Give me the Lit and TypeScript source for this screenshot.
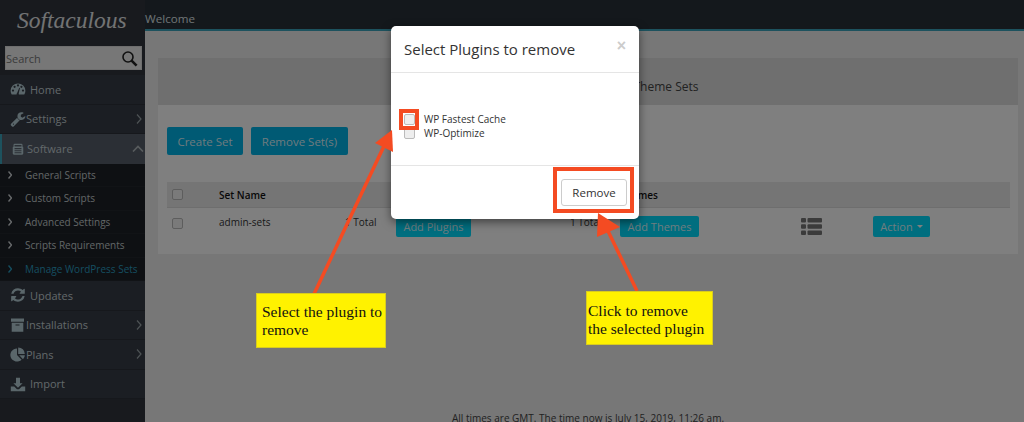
import { LitElement, html, css, svg } from "lit";
import { customElement } from "lit/decorators.js";

const icons: Record<string, unknown> = {
  home: svg`<path d="M8 2.4a7.4 7.4 0 0 0-7.4 7.4c0 1.4.4 2.7 1.1 3.8h12.6c.7-1.1 1.1-2.4 1.1-3.8A7.4 7.4 0 0 0 8 2.4z"/><g fill="#363c46"><circle cx="3" cy="9.6" r="1.1"/><circle cx="4.6" cy="5.8" r="1.1"/><circle cx="8" cy="4.4" r="1.1"/><circle cx="11.4" cy="5.8" r="1.1"/><circle cx="13" cy="9.6" r="1.1"/><path d="M7 12.2 9.3 6.8l.7.3-1.3 5.4a1.2 1.2 0 1 1-1.7-.3z"/></g>`,
  settings: svg`<g transform="scale(.0089)"><path d="M448 1472q0-26-19-45t-45-19-45 19-19 45 19 45 45 19 45-19 19-45zm644-420l-682 682q-37 37-90 37-52 0-91-37l-106-108q-38-36-38-90 0-53 38-91l681-681q39 98 114.5 173.5t173.5 114.5zm634-435q0 39-23 106-47 134-164.5 217.5t-258.5 83.5q-185 0-316.5-131.5t-131.5-316.5 131.5-316.5 316.5-131.5q58 0 121.5 16.5t107.5 46.5q16 11 16 28t-16 28l-293 169v224l193 106q5-3 79-48.5t135.5-81 70.5-35.5q15 0 23.5 10t8.5 25z"/></g>`,
  software: svg`<path fill-rule="evenodd" d="M3.5 1h9A1.5 1.5 0 0 1 14 2.5V4.5l1 1v8.5a1.5 1.5 0 0 1-1.5 1.5h-11A1.5 1.5 0 0 1 1 14V5.5l1-1V2.5A1.5 1.5 0 0 1 3.5 1zM3.4 2.6v2.2h9.2V2.6zM3.4 6.8v1.5h9.2V6.8zm0 2.7V11h9.2V9.5zm0 2.7v1.5h9.2v-1.5z"/>`,
  updates: svg`<g transform="scale(.0089)"><path d="M1639 1056q0 5-1 7-64 268-268 434.5t-478 166.5q-146 0-282.5-55t-243.5-157l-129 129q-19 19-45 19t-45-19-19-45v-448q0-26 19-45t45-19h448q26 0 45 19t19 45-19 45l-137 137q71 66 161 102t187 36q134 0 250-65t186-179q11-17 53-117 8-23 30-23h192q13 0 22.5 9.5t9.5 22.5zm25-800v448q0 26-19 45t-45 19h-448q-26 0-45-19t-19-45 19-45l138-138q-148-137-349-137-134 0-250 65t-186 179q-11 17-53 117-8 23-30 23h-199q-13 0-22.5-9.5t-9.5-22.5v-7q65-268 270-434.5t480-166.5q146 0 284 55.5t245 156.5l130-129q19-19 45-19t45 19 19 45z"/></g>`,
  installations: svg`<path fill-rule="evenodd" d="M1 1.5h13v3.2H1zM1.7 5.7h11.6v9.1H1.7zM5.5 7.4v1.2h4V7.4z"/>`,
  plans: svg`<path d="M7 2.4V9l4.6 4.7A6.6 6.6 0 1 1 7 2.4z"/><path d="M8.2 1.4A6.6 6.6 0 0 1 14.8 8H8.2z"/><path d="M9.2 9.2h5.7a6.6 6.6 0 0 1-1.9 4z"/>`,
  import: svg`<path d="M6 1.8h4v5.4h2.6L8 11.8 3.4 7.2H6z"/><path d="M.8 10.4h3.4L7 13.2h2l2.8-2.8h3.4v4.8H.8z"/>`,
};

const menuTop = [
  { label: "Home", icon: "home", slot: "wide" },
  { label: "Settings", icon: "settings", slot: "narrow", arrow: true },
];
const menuBottom = [
  { label: "Updates", icon: "updates", slot: "wide" },
  { label: "Installations", icon: "installations", slot: "narrow", arrow: true },
  { label: "Plans", icon: "plans", slot: "narrow", arrow: true },
  { label: "Import", icon: "import", slot: "wide" },
];
const subs = ["General Scripts", "Custom Scripts", "Advanced Settings", "Scripts Requirements", "Manage WordPress Sets"];

@customElement("app-root")
export class AppRoot extends LitElement {
  static styles = css`
    :host { display: block; width: 1024px; height: 422px; overflow: hidden; position: relative; font-family: "Open Sans", sans-serif; background: #eee; }
    .app { display: flex; height: 422px; }
    .side { width: 145px; flex: none; background: #30343c; display: flex; flex-direction: column; }
    .logo { height: 46px; box-sizing: border-box; padding: 0 0 0 17px; font: italic 23.5px/41px "Liberation Serif", serif; color: #e4e6e8; white-space: nowrap; overflow: hidden; }
    .search { margin: 0 3px 5px 5px; height: 24px; box-sizing: border-box; background: #eee; border: 1px solid #ddd; display: flex; align-items: center; justify-content: space-between; padding: 0 3px 0 0; font-size: 11px; color: #777; }
    .search svg { width: 17px; height: 17px; }
    .item { height: 29.5px; box-sizing: border-box; display: flex; align-items: center; padding-left: 10px; background: #363c46; border-bottom: 1px solid #2c3038; font-size: 11px; color: #c4d0d4; }
    .item svg.ic { width: 16px; height: 16px; fill: #b4ccd4; flex: none; }
    .slot-wide svg.ic { margin-right: 4px; }
    .slot-narrow svg.ic { margin-right: 0; }
    .item .lab { flex: 1; }
    .arrow { width: 6px; height: 10px; margin-right: 3px; fill: none; stroke: #9aa4a8; stroke-width: 1.2; flex: none; }
    .item.active { background: #565e6a; border-left: 2px solid #3aa5bd; padding-left: 8px; border-bottom: 0; }
    .item.active svg.ic { width: 12px; height: 12px; margin: 0 3px 0 2px; }
    .active .up { width: 12px; height: 7px; margin-right: 1px; fill: none; stroke: #b0b8bc; stroke-width: 1.6; }
    .subs { background: #1c2026; }
    .sub { height: 23.5px; box-sizing: border-box; display: flex; align-items: center; gap: 13px; padding-left: 8px; font-size: 10px; color: #c4ccce; border-bottom: 1px solid #22262c; }
    .sub svg { width: 4px; height: 8px; fill: none; stroke: #d0d4d8; stroke-width: 1.4; flex: none; }
    .sub.on { color: #2a9cc0; }
    .sub.on svg { stroke: #2a9cc0; }
    .main { flex: 1; min-width: 0; display: flex; flex-direction: column; }
    .top { height: 29px; background: #283038; color: #dfe6e8; font-size: 11.6px; line-height: 38px; flex: none; box-sizing: border-box; }
    .strip { height: 2px; background: #3aa5bd; flex: none; }
    .content { flex: 1; padding: 27px 6px 0 13px; display: flex; flex-direction: column; }
    .panel { background: #fff; height: 196px; flex: none; }
    .phead { height: 47px; box-sizing: border-box; background: #dedede; display: flex; align-items: center; justify-content: center; font-size: 12px; color: #444; padding: 10px 18px 0 0; }
    .pbody { padding: 22px 8px 0 9px; }
    .btns { display: flex; gap: 8px; }
    .btn { display: inline-flex; align-items: center; justify-content: center; background: #00dcff; color: rgba(255,255,255,.88); border-radius: 2px; font-size: 11.5px; box-sizing: border-box; }
    .btn.big { height: 28px; background: #00b4e8; }
    .create { width: 76px; }
    .rem { width: 97px; }
    .grid { display: grid; grid-template-columns: 47px 126px 51px 174px 50px 181px 72px 1fr; padding-left: 5px; align-items: center; font-size: 10px; color: #333; }
    .thead { margin-top: 27px; height: 26px; background: #eaeaea; font-weight: 600; color: #111; border-bottom: 1px solid #ddd; box-sizing: border-box; }
    .trow { height: 32px; }
    .cell { margin-bottom: 4px; }
    .box { width: 11px; height: 11px; box-sizing: border-box; border: 1px solid #bbb; border-radius: 2px; background: #f4f4f4; }
    .trow .box { margin-bottom: 2px; }
    .tbtn { height: 21px; margin-top: 4px; font-size: 11px; }
    .add { width: 75px; }
    .addt { width: 79px; }
    .act { width: 57px; gap: 4px; }
    .car { width: 0; height: 0; border-left: 3.5px solid transparent; border-right: 3.5px solid transparent; border-top: 3.5px solid #fff; }
    .list { width: 21px; height: 17px; fill: #777; display: block; margin-top: 4px; }
    .foot { margin-top: auto; margin-bottom: -2px; text-align: center; font-size: 10px; color: #444; height: 11px; line-height: 11px; white-space: nowrap; }
    .backdrop { position: absolute; inset: 0; background: rgba(0,0,0,.5); }
    .modal { position: absolute; left: 391px; top: 26px; width: 248px; height: 193px; background: #fff; border-radius: 5px; box-shadow: 0 3px 10px rgba(0,0,0,.5); color: #333; display: flex; flex-direction: column; }
    .mhead { height: 47px; flex: none; box-sizing: border-box; border-bottom: 1px solid #e5e5e5; display: flex; justify-content: space-between; align-items: center; padding: 0 13px; font-size: 15px; color: #333; }
    .close { font-size: 16px; color: #ccc; font-weight: 700; line-height: 1; margin-top: -6px; font-family: "Liberation Sans", sans-serif; }
    .mbody { height: 93px; flex: none; box-sizing: border-box; border-bottom: 1px solid #e5e5e5; padding: 40px 0 0 13px; font-size: 10px; line-height: 13.5px; }
    .check { display: flex; gap: 9px; align-items: center; }
    .check .box { background: #eee; border-color: #bbb; }
    .mfoot { flex: 1; display: flex; justify-content: flex-end; padding: 13px 12px 0 0; }
    .remove { width: 66px; height: 27px; box-sizing: border-box; border: 1px solid #ccc; border-radius: 3px; background: #fff; font-size: 11.5px; display: flex; align-items: center; justify-content: center; color: #333; }
    .hl { position: absolute; border: 4px solid #f44b22; box-sizing: border-box; }
    .hl1 { left: 399px; top: 109px; width: 20px; height: 21px; }
    .hl2 { left: 553px; top: 167px; width: 81px; height: 46px; }
    .arrows { position: absolute; left: 0; top: 0; width: 1024px; height: 422px; }
    .note { position: absolute; background: #fff200; border: 1px solid #d8cc20; box-sizing: border-box; font: 15.5px/17.5px "Liberation Serif", serif; color: #111; white-space: nowrap; }
    .n1 { left: 256px; top: 293px; width: 130px; height: 55px; padding: 9px 0 0 5px; }
    .n2 { left: 586px; top: 291px; width: 127px; height: 54px; padding: 10px 0 0 1px; }
  `;

  private item(i: { label: string; icon: string; slot: string; arrow?: boolean }) {
    return html`<div class="item slot-${i.slot}">
      <svg class="ic" viewBox="0 0 16 16">${icons[i.icon]}</svg>
      <span class="lab">${i.label}</span>
      ${i.arrow ? html`<svg class="arrow" viewBox="0 0 6 10"><path d="M1 .5 5 5 1 9.5"/></svg>` : ""}
    </div>`;
  }

  render() {
    return html`
      <div class="app">
        <aside class="side">
          <div class="logo">Softaculous</div>
          <div class="search"><span>Search</span>
            <svg viewBox="0 0 17 17" fill="none" stroke="#222"><circle cx="7" cy="7" r="5" stroke-width="1.6"/><path d="M10.6 10.6 15.6 15.6" stroke-width="2.6"/></svg>
          </div>
          ${menuTop.map((m) => this.item(m))}
          <div class="item slot-narrow active">
            <svg class="ic" viewBox="0 0 16 16">${icons.software}</svg>
            <span class="lab">Software</span>
            <svg class="up" viewBox="0 0 12 7"><path d="M1 6.5 6 1.5l5 5"/></svg>
          </div>
          <div class="subs">
            ${subs.map((s, i) => html`<div class="sub ${i === 4 ? "on" : ""}"><svg viewBox="0 0 4 8"><path d="M.5.5 3.5 4 .5 7.5"/></svg><span>${s}</span></div>`)}
          </div>
          ${menuBottom.map((m) => this.item(m))}
        </aside>
        <div class="main">
          <div class="top">Welcome</div>
          <div class="strip"></div>
          <div class="content">
            <section class="panel">
              <div class="phead">Manage WordPress Plugin and Theme Sets</div>
              <div class="pbody">
                <div class="btns"><span class="btn big create">Create Set</span><span class="btn big rem">Remove Set(s)</span></div>
                <div class="grid thead"><span class="box"></span><span>Set Name</span><span></span><span>Plugins</span><span></span><span>Themes</span><span></span><span></span></div>
                <div class="grid trow">
                  <span class="box"></span><span class="cell">admin-sets</span><span class="cell">1 Total</span>
                  <span class="btn tbtn add">Add Plugins</span>
                  <span class="cell">1 Total</span>
                  <span class="btn tbtn addt">Add Themes</span>
                  <svg class="list" viewBox="0 0 21 17"><rect y="0" width="5" height="4.6" rx="1"/><rect x="6.5" y="0" width="14.5" height="4.6" rx="1"/><rect y="6.2" width="5" height="4.6" rx="1"/><rect x="6.5" y="6.2" width="14.5" height="4.6" rx="1"/><rect y="12.4" width="5" height="4.6" rx="1"/><rect x="6.5" y="12.4" width="14.5" height="4.6" rx="1"/></svg>
                  <span class="btn tbtn act">Action <i class="car"></i></span>
                </div>
              </div>
            </section>
            <div class="foot">All times are GMT. The time now is July 15, 2019, 11:26 am.</div>
          </div>
        </div>
      </div>
      <div class="backdrop"></div>
      <div class="modal">
        <div class="mhead"><span>Select Plugins to remove</span><span class="close">×</span></div>
        <div class="mbody">
          <label class="check"><span class="box"></span>WP Fastest Cache</label>
          <label class="check"><span class="box"></span>WP-Optimize</label>
        </div>
        <div class="mfoot"><span class="remove">Remove</span></div>
      </div>
      <div class="hl hl1"></div>
      <div class="hl hl2"></div>
      <svg class="arrows" viewBox="0 0 1024 422" fill="#f44b22" stroke="none">
        <path d="M314 294 384 146" stroke="#f44b22" stroke-width="3.5" fill="none"/>
        <path d="M392 130 375 143 393 152z"/>
        <path d="M637 291 608 231" stroke="#f44b22" stroke-width="3.5" fill="none"/>
        <path d="M598 213 597 237 620 227z"/>
      </svg>
      <div class="note n1">Select the plugin to<br />remove</div>
      <div class="note n2">Click to remove<br />the selected plugin</div>
    `;
  }
}
